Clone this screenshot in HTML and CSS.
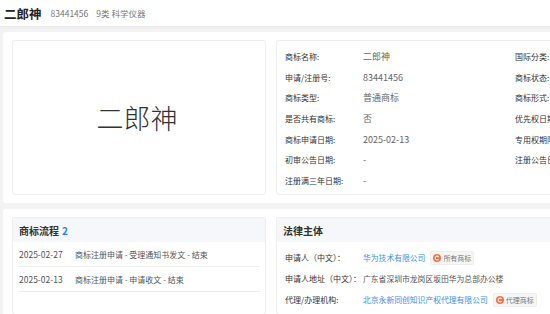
FILE: index.html
```html
<!DOCTYPE html>
<html lang="zh-CN">
<head>
    <meta charset="UTF-8">
    <meta name="viewport" content="width=device-width, initial-scale=1.0">
    <title>二郎神 - 商标详情</title>
    <link rel="stylesheet" href="styles.css">
</head>
<body>
    <div class="top-bar">
        <span class="tm-title">二郎神</span>
        <span class="tm-meta">83441456</span>
        <span class="tm-meta">9类 科学仪器</span>
    </div>

    <div class="panel">
        <div class="card image-card">
            <span class="tm-word">二郎神</span>
        </div>
        <div class="card info-card">
            <div class="info-grid">
                <span class="label">商标名称:</span><span class="value">二郎神</span><span class="label">国际分类:</span><span class="value">第9类 科学仪器</span>
                <span class="label">申请/注册号:</span><span class="value">83441456</span><span class="label">商标状态:</span><span class="value">等待实质审查</span>
                <span class="label">商标类型:</span><span class="value">普通商标</span><span class="label">商标形式:</span><span class="value">文字</span>
                <span class="label">是否共有商标:</span><span class="value">否</span><span class="label">优先权日期:</span><span class="value">-</span>
                <span class="label">商标申请日期:</span><span class="value">2025-02-13</span><span class="label">专用权期限:</span><span class="value">-</span>
                <span class="label">初审公告日期:</span><span class="value">-</span><span class="label">注册公告日期:</span><span class="value">-</span>
                <span class="label">注册满三年日期:</span><span class="value">-</span><span class="label"></span><span class="value"></span>
            </div>
        </div>
    </div>

    <div class="panel">
        <div class="card flow-card">
            <div class="card-head">商标流程 <span class="count">2</span></div>
            <div class="flow-row"><span class="flow-date">2025-02-27</span><span>商标注册申请 - 受理通知书发文 - 结束</span></div>
            <div class="flow-row"><span class="flow-date">2025-02-13</span><span>商标注册申请 - 申请收文 - 结束</span></div>
        </div>
        <div class="card legal-card">
            <div class="card-head">法律主体</div>
            <div class="legal-row">
                <span class="label">申请人（中文）：</span>
                <span class="link">华为技术有限公司</span>
                <span class="tag">
                    <svg width="8" height="8" viewBox="0 0 8 8"><circle cx="4" cy="4" r="4" fill="#ff6b3d"/><path d="M5.6 2.8A1.9 1.9 0 1 0 5.6 5.2" stroke="#fff" stroke-width="1.1" fill="none"/></svg>
                    所有商标
                </span>
            </div>
            <div class="legal-row">
                <span class="label">申请人地址（中文）：</span>
                <span class="plain">广东省深圳市龙岗区坂田华为总部办公楼</span>
            </div>
            <div class="legal-row">
                <span class="label">代理/办理机构:</span>
                <span class="link">北京永新同创知识产权代理有限公司</span>
                <span class="tag">
                    <svg width="8" height="8" viewBox="0 0 8 8"><circle cx="4" cy="4" r="4" fill="#ff6b3d"/><path d="M5.6 2.8A1.9 1.9 0 1 0 5.6 5.2" stroke="#fff" stroke-width="1.1" fill="none"/></svg>
                    代理商标
                </span>
            </div>
        </div>
    </div>
</body>
</html>
```

FILE: styles.css
```css
html, body { overflow: hidden; }
body { margin: 0; width: 820px; background: #f3f3f3; font-family: "Noto Sans CJK SC", "Microsoft YaHei", sans-serif; font-size: 8px; color: #333; }

.top-bar { height: 26px; background: #fff; display: flex; align-items: center; padding-left: 4px; gap: 8px; box-shadow: 0 1px 3px rgba(0,0,0,0.05); }
.tm-title { font-size: 12.5px; font-weight: bold; color: #222; margin-right: 1px; }
.tm-meta { color: #777; font-size: 8.5px; }

.panel { background: #fff; margin: 6px 0 5px 3px; padding: 8px 9px; border-radius: 3px; display: flex; gap: 10px; }
.card { border: 1px solid #eeeeee; border-radius: 3px; background: #fff; }

.image-card { width: 252px; height: 153px; display: flex; align-items: center; justify-content: center; flex-shrink: 0; }
.tm-word { font-size: 27px; font-weight: 300; color: #333; margin-right: 4px; }

.info-card { flex: 1; padding: 5px 8px 0 8px; box-sizing: border-box; height: 155px; }
.info-grid { display: grid; grid-template-columns: 78px 152px 78px 1fr; grid-auto-rows: 20.7px; align-items: center; }
.label { color: #333; }
.value { color: #666; font-size: 9px; }

.card-head { height: 24px; background: #f5f7fa; display: flex; align-items: center; padding-left: 6px; font-size: 10px; font-weight: bold; color: #333; border-radius: 3px 3px 0 0; }
.count { color: #1e88f0; margin-left: 3px; }

.flow-card { width: 252px; height: 96px; flex-shrink: 0; }
.flow-row { margin: 0 5px; height: 24px; border-bottom: 1px solid #eeeeee; display: flex; align-items: center; color: #555; }
.flow-date { width: 56px; padding-left: 1px; color: #555; font-size: 8.5px; }

.legal-card { flex: 1; }
.legal-card .card-head + .legal-row { margin-top: 5px; }
.legal-row { display: flex; align-items: center; height: 21px; padding-left: 8px; }
.legal-row .label { min-width: 78px; }
.link { color: #3a8ff2; font-size: 7.8px; }
.plain { color: #555; font-size: 7.8px; }
.tag { display: inline-flex; align-items: center; gap: 2px; margin-left: 5px; padding: 0 2px; height: 12px; background: #f6f6f6; border: 1px solid #eeeeee; border-radius: 2px; color: #777; font-size: 7px; }
```
